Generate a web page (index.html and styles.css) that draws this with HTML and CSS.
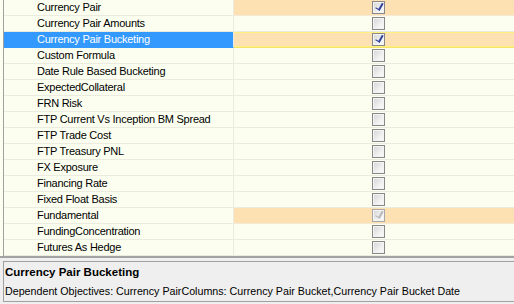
FILE: index.html
```html
<!DOCTYPE html>
<html>
<head>
<meta charset="utf-8">
<link rel="stylesheet" href="styles.css">
</head>
<body>
<div class="app">
  <div class="list">
    <div class="row checked"><div class="name">Currency Pair</div><div class="val"><span class="cb on"></span></div></div>
    <div class="row"><div class="name">Currency Pair Amounts</div><div class="val"><span class="cb"></span></div></div>
    <div class="row checked selected"><div class="name">Currency Pair Bucketing</div><div class="val"><span class="cb on"></span></div></div>
    <div class="row"><div class="name">Custom Formula</div><div class="val"><span class="cb"></span></div></div>
    <div class="row"><div class="name">Date Rule Based Bucketing</div><div class="val"><span class="cb"></span></div></div>
    <div class="row"><div class="name">ExpectedCollateral</div><div class="val"><span class="cb"></span></div></div>
    <div class="row"><div class="name">FRN Risk</div><div class="val"><span class="cb"></span></div></div>
    <div class="row"><div class="name">FTP Current Vs Inception BM Spread</div><div class="val"><span class="cb"></span></div></div>
    <div class="row"><div class="name">FTP Trade Cost</div><div class="val"><span class="cb"></span></div></div>
    <div class="row"><div class="name">FTP Treasury PNL</div><div class="val"><span class="cb"></span></div></div>
    <div class="row"><div class="name">FX Exposure</div><div class="val"><span class="cb"></span></div></div>
    <div class="row"><div class="name">Financing Rate</div><div class="val"><span class="cb"></span></div></div>
    <div class="row"><div class="name">Fixed Float Basis</div><div class="val"><span class="cb"></span></div></div>
    <div class="row checked"><div class="name">Fundamental</div><div class="val"><span class="cb on disabled"></span></div></div>
    <div class="row"><div class="name">FundingConcentration</div><div class="val"><span class="cb"></span></div></div>
    <div class="row"><div class="name">Futures As Hedge</div><div class="val"><span class="cb"></span></div></div>
  </div>
  <div class="info">
    <div class="info-box">
      <div class="info-title">Currency Pair Bucketing</div>
      <div class="info-text">Dependent Objectives: Currency PairColumns: Currency Pair Bucket,Currency Pair Bucket Date</div>
    </div>
  </div>
</div>
</body>
</html>
```
FILE: styles.css
```css
html, body {
  margin: 0;
  padding: 0;
  background: #efefef;
}
body {
  width: 514px;
  height: 304px;
  overflow: hidden;
  font-family: "Liberation Sans", Arial, sans-serif;
  font-size: 11px;
  color: #000;
}
.app {
  display: flex;
  flex-direction: column;
  height: 304px;
}
.list {
  display: flex;
  flex-direction: column;
  background: #fcfff0;
  padding-left: 3px;
  border-bottom: 2px solid #a3a3a3;
}
.row {
  display: grid;
  grid-template-columns: 230px 1fr;
  height: 16px;
  border-left: 1px solid #a0a0a0;
}
.name {
  padding-left: 33px;
  line-height: 15px;
  border-bottom: 1px solid #ebebdf;
  border-right: 1px solid #ebebdf;
  white-space: nowrap;
  font-size: 11px;
  letter-spacing: -0.25px;
}
.val {
  display: flex;
  justify-content: flex-start;
  padding-left: 138px;
  align-items: flex-start;
  padding-top: 1px;
  border-bottom: 1px solid #ebebdf;
}
.row.checked .val {
  background: #fde1b3;
  border-bottom-color: #f3e9d6;
}
.row.selected .name {
  background: #3399ff;
  color: #fff;
  border-bottom-color: #3399ff;
}
.row.selected .val {
  box-shadow: inset 0 1px 0 #fff080, inset 0 -1px 0 #fff080;
  border-bottom-color: #f5e46a;
}
.cb {
  display: block;
  width: 11px;
  height: 11px;
  border: 1px solid #888;
  box-shadow: inset 0 0 0 1px #f4f4f4;
  background: linear-gradient(135deg, #d4d4d4 0%, #f0f0f0 60%, #ffffff 100%);
  position: relative;
}
.cb.on::after {
  content: "";
  position: absolute;
  left: 4px;
  top: 0px;
  width: 3px;
  height: 7px;
  border-right: 2px solid #33449a;
  border-bottom: 1px solid #33449a;
  transform: rotate(30deg);
}
.cb.disabled {
  border-color: #a8a8a8;
}
.cb.disabled::after {
  border-color: #b8b8b8;
}
.info {
  padding: 3px 0 3px 3px;
  flex: 1;
}
.info-box {
  border: 1px solid #a0a0a0;
  border-right: none;
  padding: 2px 0 0 1px;
  height: 37px;
}
.info-title {
  font-weight: bold;
  font-size: 11.5px;
  line-height: 15px;
  margin-top: 1px;
}
.info-text {
  font-size: 10.7px;
  line-height: 15px;
  margin-top: 4px;
}
```
